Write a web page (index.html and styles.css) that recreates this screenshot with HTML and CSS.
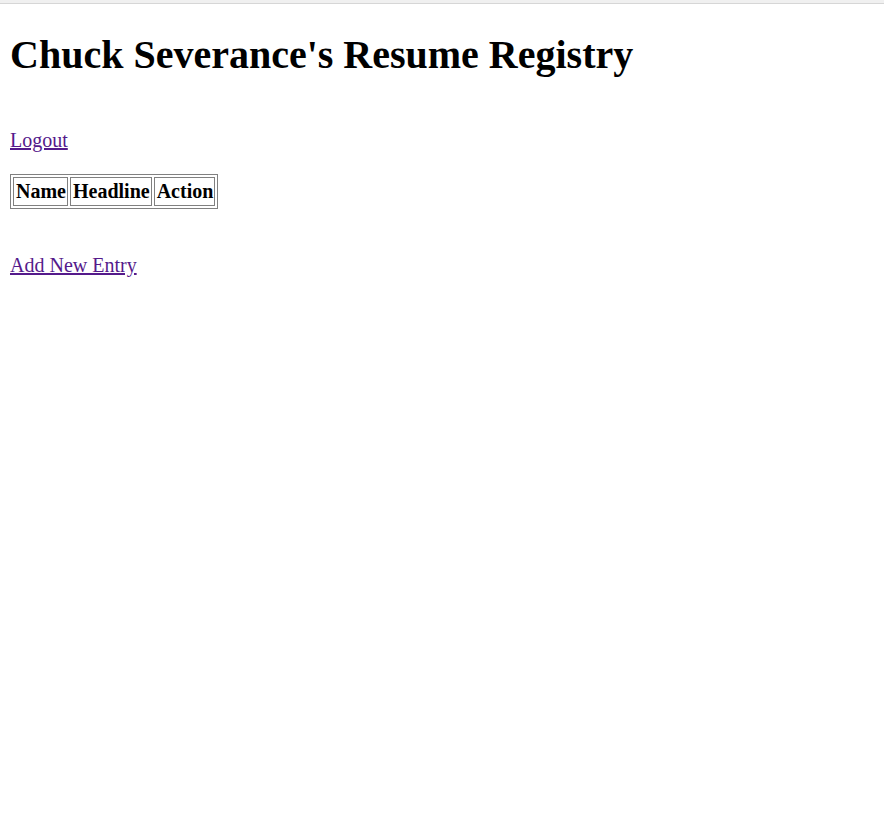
FILE: index.html
```html
<!DOCTYPE html>
<html>
<head>
<meta charset="utf-8">
<title>Chuck Severance's Resume Registry</title>
<link rel="stylesheet" href="styles.css">
</head>
<body>
<div class="topline"></div>
<h1 class="title">Chuck Severance's Resume Registry</h1>
<p class="para logout"><a class="link" href="#">Logout</a></p>
<table class="registry">
<tr><th class="cell">Name</th><th class="cell">Headline</th><th class="cell">Action</th></tr>
</table>
<p class="para add"><a class="link" href="#">Add New Entry</a></p>
</body>
</html>
```
FILE: styles.css
```css
html { background: #fff; }
body {
  margin: 10px;
  font-family: "Liberation Serif", "Times New Roman", serif;
  font-size: 20px;
  color: #000;
}
.topline {
  position: absolute;
  left: 0;
  top: 0;
  width: 100%;
  height: 3px;
  background: #f0f0f0;
  border-bottom: 1px solid #d6d6d6;
}
.title {
  font-size: 40px;
  font-weight: bold;
  margin: 21px 0 51px;
}
.para { margin: 20px 0; }
.logout { margin-bottom: 22px; }
.link { color: #551a8b; }
.registry {
  border: 1px solid #808080;
  border-spacing: 2px;
  border-collapse: separate;
}
.cell {
  border: 1px solid #808080;
  padding: 2px 1px 2px 2px;
  font-weight: bold;
}
.add { margin-top: 45px; }
```
